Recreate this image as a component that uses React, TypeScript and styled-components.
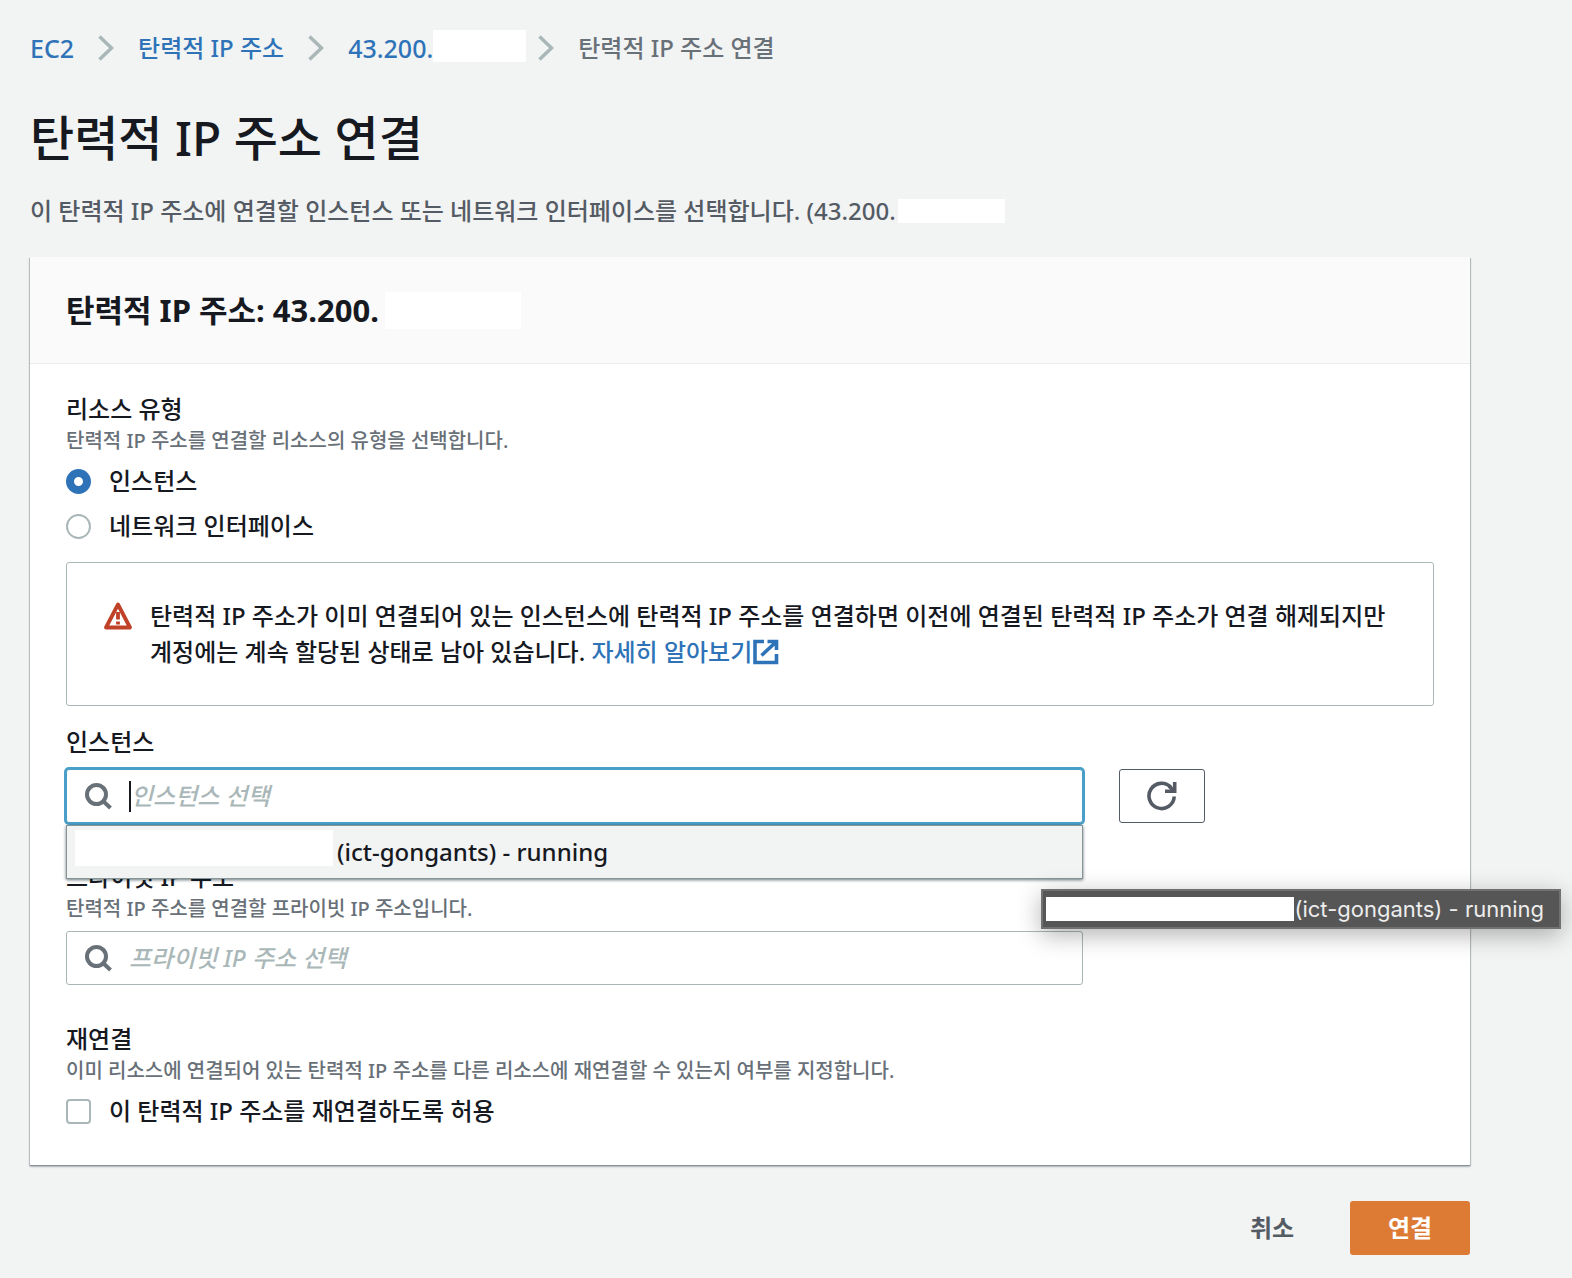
import React, { useState } from "react";
import styled, { createGlobalStyle, css } from "styled-components";

const color = {
  page: "#f2f3f3",
  text: "#16191f",
  muted: "#545b64",
  hint: "#687078",
  line: "#aab7b8",
  link: "#2e73b8",
  focus: "#4a9fc8",
  primary: "#dd7a34",
  danger: "#bf4128",
};

const GlobalStyle = createGlobalStyle`
  *, *::before, *::after { box-sizing: border-box; }
  body {
    margin: 0;
    background: ${color.page};
    color: ${color.text};
    font-family: "Noto Sans", "Noto Sans CJK KR", sans-serif;
    font-size: 24px;
    font-weight: 500;
    line-height: 36px;
  }
  button, input { font: inherit; color: inherit; }
`;

const Page = styled.main`
  padding: 30px 102px 23px 30px;
`;

const Crumbs = styled.ol`
  display: flex;
  align-items: center;
  gap: 24px;
  margin: 0;
  padding: 0;
  list-style: none;
`;

const Crumb = styled.li`
  display: flex;
  align-items: center;
  gap: 24px;
  color: ${color.hint};
`;

const CrumbLink = styled.a<{ $latin?: boolean }>`
  display: flex;
  align-items: flex-start;
  color: ${color.link};
  font-size: ${(p) => (p.$latin ? 25 : 24)}px;
  text-decoration: none;
`;

const Mask = styled.span<{ $w: number; $h: number; $bleed?: number }>`
  display: inline-block;
  flex: none;
  width: ${(p) => p.$w}px;
  height: ${(p) => p.$h}px;
  margin-right: ${(p) => -(p.$bleed ?? 0)}px;
  background: #fff;
`;

const Title = styled.h1`
  margin: 36px 0 0;
  font-size: 48px;
  line-height: 72px;
  font-weight: 500;
`;

const Lead = styled.p`
  display: flex;
  align-items: center;
  gap: 2px;
  margin: 19px 0 28px;
  color: ${color.muted};
`;

const Panel = styled.section`
  background: #fff;
  box-shadow: 0 1px 1px #87959a, 0 2px 2px rgba(0, 28, 36, 0.2),
    1px 1px 1px rgba(0, 28, 36, 0.15), -1px 1px 1px rgba(0, 28, 36, 0.15);
`;

const PanelHeader = styled.header`
  display: flex;
  align-items: center;
  padding: 32px 36px;
  background: #fafafa;
  border-bottom: 1px solid #eaeded;
`;

const PanelTitle = styled.h2`
  display: flex;
  align-items: center;
  gap: 6px;
  margin: 0;
  font-size: 31px;
  line-height: 42px;
  font-weight: 700;
`;

const PanelBody = styled.div`
  padding: 27px 36px 36px;
`;

const Group = styled.fieldset`
  display: flex;
  flex-direction: column;
  margin: 0;
  padding: 0;
  border: 0;
`;

const Legend = styled.legend`
  padding: 0;
`;

const Label = styled.label`
  display: block;
`;

const Hint = styled.p`
  margin: 0;
  color: ${color.hint};
  font-size: 20px;
  line-height: 27px;
`;

const Choice = styled.label`
  display: flex;
  align-items: center;
  gap: 18px;
  margin-top: 9px;
`;

const choiceBox = css`
  appearance: none;
  flex: none;
  width: 25px;
  height: 25px;
  margin: 0;
  border: 2px solid ${color.line};
  background: #fff;
`;

const Radio = styled.input`
  ${choiceBox}
  border-radius: 50%;

  &:checked {
    border: 8px solid ${color.link};
  }
`;

const Checkbox = styled.input`
  ${choiceBox}
  border-radius: 4px;

  &:checked {
    border-color: ${color.link};
    background: ${color.link};
  }
`;

const Alert = styled.div`
  display: flex;
  gap: 17px;
  margin: 18px 0;
  padding: 35px 36px;
  border: 1px solid ${color.line};
  border-radius: 3px;

  p {
    margin: 0;
    word-break: keep-all;
  }

  > svg {
    flex: none;
    margin-top: 3px;
  }
`;

const InlineLink = styled.a`
  color: ${color.link};
  text-decoration: none;

  svg {
    margin-left: 1px;
    vertical-align: -4px;
  }
`;

const Field = styled.div`
  & + & {
    margin-top: 36px;
  }
`;

const FieldRow = styled.div`
  display: grid;
  grid-template-columns: repeat(12, 1fr);
  column-gap: 36px;
  margin-top: 9px;
`;

const Combo = styled.div`
  position: relative;
  grid-column: span 9;
`;

const SearchBox = styled.div<{ $focused?: boolean }>`
  display: flex;
  align-items: center;
  height: 54px;
  padding: 0 18px;
  border: 1px solid ${(p) => (p.$focused ? color.focus : color.line)};
  border-radius: 3px;
  background: #fff;
  ${(p) => p.$focused && `box-shadow: 0 0 0 2px ${color.focus};`}

  svg {
    flex: none;
    margin-right: 17px;
  }
`;

const Caret = styled.span`
  flex: none;
  width: 2px;
  height: 31px;
  background: ${color.text};
`;

const SearchInput = styled.input`
  flex: 1;
  min-width: 0;
  padding: 0;
  border: 0;
  outline: 0;
  background: none;

  &::placeholder {
    color: ${color.line};
    font-style: italic;
    opacity: 1;
  }
`;

const Options = styled.ul`
  position: absolute;
  z-index: 1;
  top: calc(100% + 2px);
  left: 0;
  right: 0;
  margin: 0;
  padding: 0;
  list-style: none;
  border: 1px solid #879596;
  background: ${color.page};
  box-shadow: 0 1px 3px rgba(0, 28, 36, 0.6);
`;

const Option = styled.li`
  display: flex;
  align-items: flex-start;
  gap: 4px;
  padding: 4px 8px;
  line-height: 44px;
`;

const Tooltip = styled.div`
  position: absolute;
  z-index: 2;
  top: 120px;
  right: -478px;
  display: flex;
  align-items: center;
  height: 40px;
  padding: 0 15px 0 3px;
  border: 2px solid #717171;
  background: #565656;
  color: #ededed;
  box-shadow: 0 6px 24px rgba(0, 0, 0, 0.3);
  font-family: Inter, sans-serif;
  font-size: 22px;
  font-weight: 400;
  line-height: 30px;
  white-space: nowrap;
`;

const IconButton = styled.button`
  grid-column: span 3;
  justify-self: start;
  display: grid;
  place-items: center;
  width: 86px;
  height: 54px;
  padding: 0;
  border: 1px solid ${color.muted};
  border-radius: 3px;
  background: #fff;
  color: ${color.muted};
`;

const Actions = styled.footer`
  display: flex;
  justify-content: flex-end;
  gap: 18px;
  margin-top: 36px;
`;

const ActionButton = styled.button<{ $primary?: boolean }>`
  min-width: 120px;
  height: 54px;
  padding: 0 36px;
  border: 0;
  border-radius: 3px;
  background: ${(p) => (p.$primary ? color.primary : "transparent")};
  color: ${(p) => (p.$primary ? "#fff" : color.muted)};
  font-weight: 700;
`;

const Chevron = () => (
  <svg width="16" height="26" viewBox="0 0 16 26" fill="none" stroke={color.line} strokeWidth="3.500" aria-hidden="true">
    <path d="M1.500 1.500 13.500 13 1.500 24.500" />
  </svg>
);

const SearchIcon = () => (
  <svg width="27" height="27" viewBox="0 0 27 27" fill="none" stroke={color.hint} aria-hidden="true">
    <circle cx="11.500" cy="11.500" r="9.500" strokeWidth="4" />
    <path d="m18 18 7.500 7" strokeWidth="4" />
  </svg>
);

const WarningIcon = () => (
  <svg width="30" height="29" viewBox="0 0 30 29" fill="none" stroke={color.danger} aria-hidden="true">
    <path d="M15 3.500 27 26.500H3z" strokeWidth="3.800" strokeLinejoin="round" />
    <path d="M15 11v7.500M15 20.500v3" strokeWidth="3.800" />
  </svg>
);

const ExternalIcon = () => (
  <svg width="26" height="26" viewBox="0 0 26 26" fill="none" stroke={color.link} strokeWidth="3.600" aria-hidden="true">
    <path d="M11 2.500H2v21h21.500V15M14.500 2.500h9V11M23 3 8.500 16.500" />
  </svg>
);

const RefreshIcon = () => (
  <svg width="30" height="30" viewBox="0 0 30 30" fill="none" stroke="currentColor" strokeWidth="3.600" aria-hidden="true">
    <path d="M27.200 15.500A12.600 12.600 0 1 1 24 6.500" />
    <path d="M27.700 1v9.300H18" />
    <path d="m22 5 5 5" />
  </svg>
);

export default function App() {
  const [type, setType] = useState("instance");
  const [allow, setAllow] = useState(false);

  return (
    <>
      <GlobalStyle />
      <Page>
        <nav>
          <Crumbs>
            <Crumb>
              <CrumbLink href="#ec2" $latin>
                EC2
              </CrumbLink>
              <Chevron />
            </Crumb>
            <Crumb>
              <CrumbLink href="#addresses">탄력적 IP 주소</CrumbLink>
              <Chevron />
            </Crumb>
            <Crumb>
              <CrumbLink href="#address" $latin>
                43.200.
                <Mask $w={93} $h={32} $bleed={12} />
              </CrumbLink>
              <Chevron />
            </Crumb>
            <Crumb>탄력적 IP 주소 연결</Crumb>
          </Crumbs>
        </nav>

        <Title>탄력적 IP 주소 연결</Title>
        <Lead>
          이 탄력적 IP 주소에 연결할 인스턴스 또는 네트워크 인터페이스를 선택합니다. (43.200.
          <Mask $w={107} $h={24} />
        </Lead>

        <Panel>
          <PanelHeader>
            <PanelTitle>
              탄력적 IP 주소: 43.200.
              <Mask $w={136} $h={37} />
            </PanelTitle>
          </PanelHeader>
          <PanelBody>
            <Group>
              <Legend>리소스 유형</Legend>
              <Hint>탄력적 IP 주소를 연결할 리소스의 유형을 선택합니다.</Hint>
              <Choice>
                <Radio type="radio" name="type" checked={type === "instance"} onChange={() => setType("instance")} />
                인스턴스
              </Choice>
              <Choice>
                <Radio type="radio" name="type" checked={type === "network"} onChange={() => setType("network")} />
                네트워크 인터페이스
              </Choice>
            </Group>

            <Alert>
              <WarningIcon />
              <p>
                탄력적 IP 주소가 이미 연결되어 있는 인스턴스에 탄력적 IP 주소를 연결하면 이전에 연결된 탄력적 IP 주소가
                연결 해제되지만 계정에는 계속 할당된 상태로 남아 있습니다.{" "}
                <InlineLink href="#learn">
                  자세히 알아보기
                  <ExternalIcon />
                </InlineLink>
              </p>
            </Alert>

            <Field>
              <Label htmlFor="instance">인스턴스</Label>
              <FieldRow>
                <Combo>
                  <SearchBox $focused>
                    <SearchIcon />
                    <Caret />
                    <SearchInput id="instance" placeholder="인스턴스 선택" />
                  </SearchBox>
                  <Options>
                    <Option>
                      <Mask $w={258} $h={36} />
                      (ict-gongants) - running
                    </Option>
                  </Options>
                  <Tooltip role="tooltip">
                    <Mask $w={248} $h={24} />
                    (ict-gongants) - running
                  </Tooltip>
                </Combo>
                <IconButton type="button" aria-label="새로 고침">
                  <RefreshIcon />
                </IconButton>
              </FieldRow>
            </Field>

            <Field>
              <Label htmlFor="private-ip">프라이빗 IP 주소</Label>
              <Hint>탄력적 IP 주소를 연결할 프라이빗 IP 주소입니다.</Hint>
              <FieldRow>
                <Combo>
                  <SearchBox>
                    <SearchIcon />
                    <SearchInput id="private-ip" placeholder="프라이빗 IP 주소 선택" />
                  </SearchBox>
                </Combo>
              </FieldRow>
            </Field>

            <Field>
              <Group>
                <Legend>재연결</Legend>
                <Hint>이미 리소스에 연결되어 있는 탄력적 IP 주소를 다른 리소스에 재연결할 수 있는지 여부를 지정합니다.</Hint>
                <Choice>
                  <Checkbox type="checkbox" checked={allow} onChange={(e) => setAllow(e.target.checked)} />
                  이 탄력적 IP 주소를 재연결하도록 허용
                </Choice>
              </Group>
            </Field>
          </PanelBody>
        </Panel>

        <Actions>
          <ActionButton type="button">취소</ActionButton>
          <ActionButton type="button" $primary>
            연결
          </ActionButton>
        </Actions>
      </Page>
    </>
  );
}
